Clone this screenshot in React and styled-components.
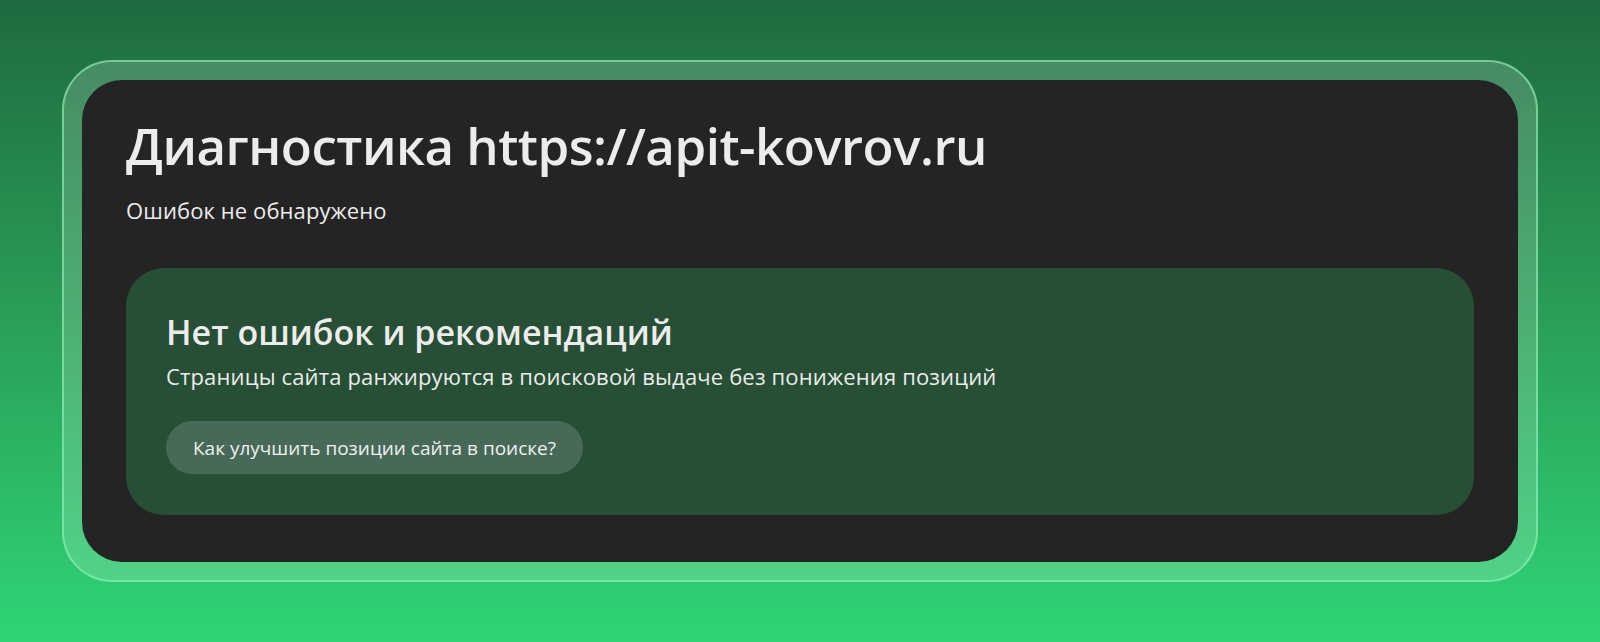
import React from 'react';
import styled, { createGlobalStyle } from 'styled-components';

const GlobalStyle = createGlobalStyle`
  html, body {
    margin: 0;
    padding: 0;
  }
  body {
    font-family: "Open Sans", "Liberation Sans", sans-serif;
    background: linear-gradient(180deg, #1f6a40 0%, #2a9f58 50%, #2fd476 100%);
    min-height: 642px;
  }
`;

const Page = styled.div`
  box-sizing: border-box;
  min-height: 642px;
  padding: 60px 62px 61px;
`;

const Frame = styled.div`
  padding: 18px;
  border: 2px solid rgba(140, 240, 180, 0.65);
  border-radius: 50px;
  background: rgba(255, 255, 255, 0.17);
`;

const Card = styled.section`
  box-sizing: border-box;
  padding: 35px 44px 47px;
  border-radius: 40px;
  background: #242424;
  color: #ececec;
`;

const Title = styled.h1`
  margin: 0;
  font-size: 51px;
  line-height: 60px;
  font-weight: 600;
  letter-spacing: -0.5px;
`;

const Subtitle = styled.p`
  margin: 21px 0 0;
  font-size: 22px;
  line-height: 28px;
  letter-spacing: 0.1px;
`;

const Notice = styled.div`
  margin-top: 44px;
  padding: 44px 40px 41px;
  border-radius: 38px;
  background: #264f35;
`;

const NoticeTitle = styled.h2`
  margin: 0;
  font-size: 34px;
  line-height: 40px;
  font-weight: 600;
`;

const NoticeText = styled.p`
  margin: 10px 0 0;
  font-size: 22px;
  line-height: 28px;
  letter-spacing: 0.15px;
`;

const HelpButton = styled.button`
  display: inline-flex;
  align-items: center;
  margin-top: 31px;
  height: 53px;
  padding: 0 27px;
  border: none;
  border-radius: 27px;
  background: #466a57;
  color: #f0f0f0;
  font-family: inherit;
  font-size: 19px;
  cursor: pointer;
`;

export default function App() {
  return (
    <>
      <GlobalStyle />
      <Page>
        <Frame>
          <Card>
            <Title>Диагностика https://apit-kovrov.ru</Title>
            <Subtitle>Ошибок не обнаружено</Subtitle>
            <Notice>
              <NoticeTitle>Нет ошибок и рекомендаций</NoticeTitle>
              <NoticeText>Страницы сайта ранжируются в поисковой выдаче без понижения позиций</NoticeText>
              <HelpButton>Как улучшить позиции сайта в поиске?</HelpButton>
            </Notice>
          </Card>
        </Frame>
      </Page>
    </>
  );
}
